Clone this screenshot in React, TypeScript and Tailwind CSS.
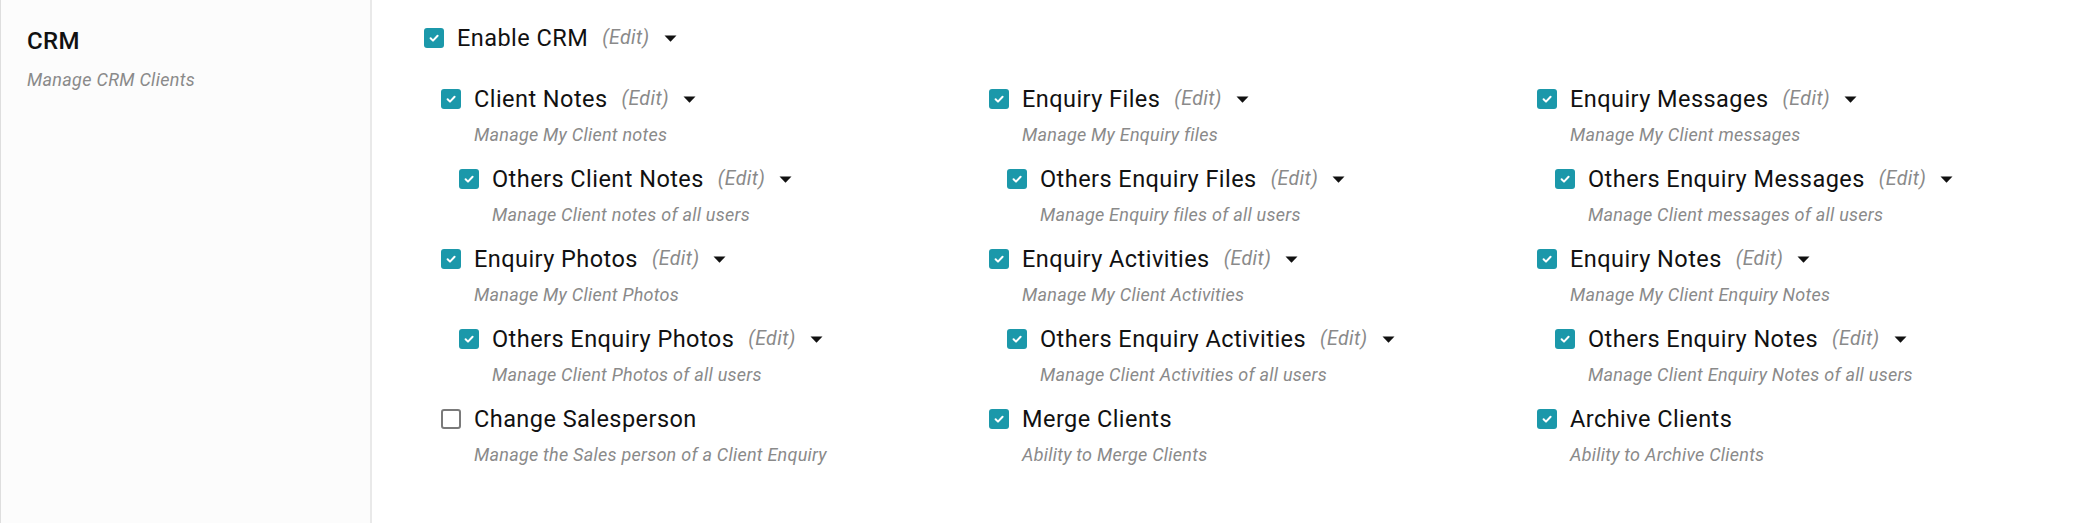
import React from "react";

type Item = { label: string; desc: string; checked: boolean; sub?: boolean; edit?: boolean };

const items: Item[] = [
  { label: "Client Notes", desc: "Manage My Client notes", checked: true, edit: true },
  { label: "Enquiry Files", desc: "Manage My Enquiry files", checked: true, edit: true },
  { label: "Enquiry Messages", desc: "Manage My Client messages", checked: true, edit: true },
  { label: "Others Client Notes", desc: "Manage Client notes of all users", checked: true, sub: true, edit: true },
  { label: "Others Enquiry Files", desc: "Manage Enquiry files of all users", checked: true, sub: true, edit: true },
  { label: "Others Enquiry Messages", desc: "Manage Client messages of all users", checked: true, sub: true, edit: true },
  { label: "Enquiry Photos", desc: "Manage My Client Photos", checked: true, edit: true },
  { label: "Enquiry Activities", desc: "Manage My Client Activities", checked: true, edit: true },
  { label: "Enquiry Notes", desc: "Manage My Client Enquiry Notes", checked: true, edit: true },
  { label: "Others Enquiry Photos", desc: "Manage Client Photos of all users", checked: true, sub: true, edit: true },
  { label: "Others Enquiry Activities", desc: "Manage Client Activities of all users", checked: true, sub: true, edit: true },
  { label: "Others Enquiry Notes", desc: "Manage Client Enquiry Notes of all users", checked: true, sub: true, edit: true },
  { label: "Change Salesperson", desc: "Manage the Sales person of a Client Enquiry", checked: false },
  { label: "Merge Clients", desc: "Ability to Merge Clients", checked: true },
  { label: "Archive Clients", desc: "Ability to Archive Clients", checked: true },
];

function Box({ checked }: { checked: boolean }) {
  if (!checked) {
    return <span className="inline-block w-[20px] h-[20px] rounded-[3px] border-2 border-[#7a7a7a] bg-white shrink-0" />;
  }
  return (
    <span className="inline-flex items-center justify-center w-[20px] h-[20px] rounded-[3px] bg-[#1b98aa] shrink-0">
      <svg width="12" height="12" viewBox="0 0 12 12">
        <path d="M2.6 6.3 L5 8.6 L9.6 3.8" fill="none" stroke="white" strokeWidth="2" strokeLinecap="round" strokeLinejoin="round" />
      </svg>
    </span>
  );
}

function Caret() {
  return (
    <svg width="13" height="7" viewBox="0 0 13 7" className="shrink-0">
      <path d="M0.5 0.5 L12.5 0.5 L6.5 6.8 Z" fill="#111" />
    </svg>
  );
}

function Label({ label, checked, edit }: { label: string; checked: boolean; edit?: boolean }) {
  return (
    <div className="flex items-center h-[30px]">
      <Box checked={checked} />
      <span className="ml-[13px] text-[23.5px] tracking-[0.45px] leading-[30px] text-[#111]">{label}</span>
      {edit && (
        <>
          <span className="ml-[14px] text-[19.5px] tracking-[0.4px] italic text-[#8a8a8a]">(Edit)</span>
          <span className="ml-[14px] flex items-center">
            <Caret />
          </span>
        </>
      )}
    </div>
  );
}

export default function App() {
  return (
    <div className="flex w-[2098px] h-[523px] bg-white font-['Roboto',sans-serif]">
      <div className="w-[372px] shrink-0 bg-[#fcfcfc] border-l border-[#dedede] border-r-2 border-r-[#e9e9e9] pl-[26px] pt-[26px]">
        <div className="text-[24px] tracking-[0.4px] font-medium leading-[30px] text-[#111]">CRM</div>
        <div className="mt-[13px] text-[18px] tracking-[0.3px] italic leading-[22px] text-[#8a8a8a]">Manage CRM Clients</div>
      </div>
      <div className="flex-1 pl-[52px] pt-[23px]">
        <Label label="Enable CRM" checked edit />
        <div className="mt-[31px] ml-[17px] grid grid-cols-[548px_548px_548px]">
          {items.map((it) => (
            <div key={it.label} className={`h-[80px] ${it.sub ? "pl-[18px]" : ""}`}>
              <Label label={it.label} checked={it.checked} edit={it.edit} />
              <div className="mt-[10px] ml-[33px] text-[18px] tracking-[0.25px] italic leading-[22px] text-[#8a8a8a]">{it.desc}</div>
            </div>
          ))}
        </div>
      </div>
    </div>
  );
}
